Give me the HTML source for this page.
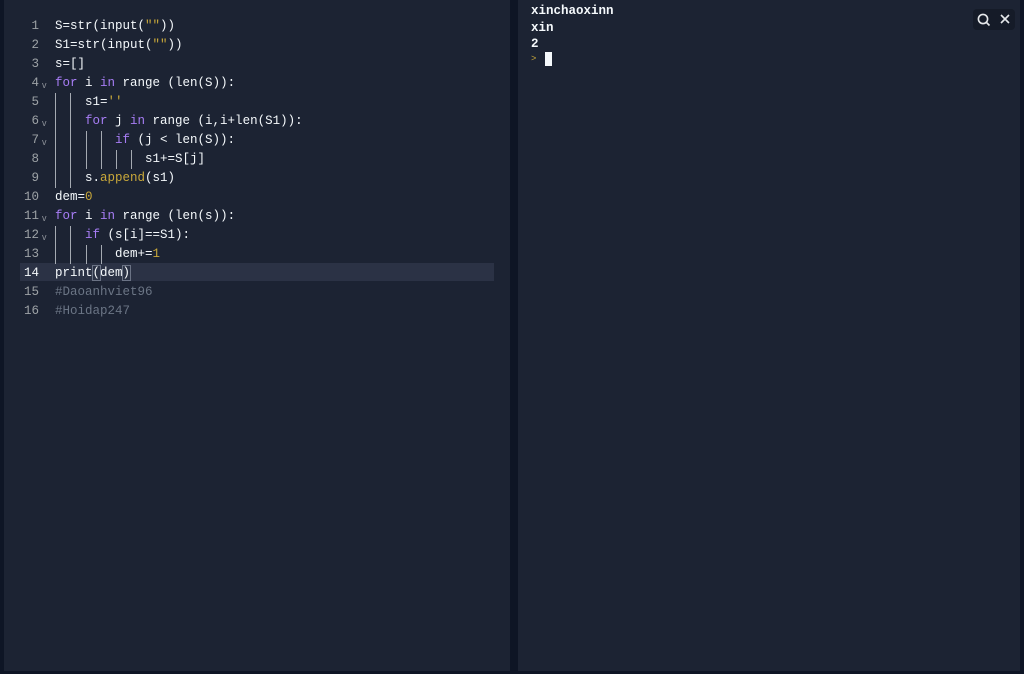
<!DOCTYPE html>
<html><head><style>
html,body{margin:0;padding:0;width:1024px;height:674px;background:#0e1525;overflow:hidden}
.p{position:absolute;background:#1c2333}
.code{position:absolute;left:0;top:17px;font-family:"Liberation Mono",monospace;font-size:12.5px;color:#f5f9fc}
.l{position:absolute;height:19px;line-height:19px;white-space:pre}
.n{position:absolute;width:39px;height:19px;line-height:19px;text-align:right;color:#9da2a6;font-family:"Liberation Mono",monospace;font-size:12.5px}
.k{color:#a77df5}.o{color:#c9a83a}.c{color:#6b7585}
.g{position:absolute;width:1px;background:#c8ccd2;opacity:.8}
.chev{position:absolute;color:#8e939a;font-size:9px;line-height:9px;font-family:"Liberation Sans",sans-serif}
.t{position:absolute;font-family:"Liberation Mono",monospace;font-size:12.5px;font-weight:bold;color:#f5f9fc;line-height:16.5px}
</style></head><body>
<div class="p" style="left:4px;top:0;width:506px;height:671px"></div>
<div class="p" style="left:518px;top:0;width:502px;height:671px"></div>
<div style="position:absolute;left:20px;top:263px;width:474px;height:18px;background:#2b3245"></div>
<div class="code">
<div class="n" style="top:0">1</div><div class="l" style="left:55px;top:0">S=str(input(<span class="o">""</span>))</div>
<div class="n" style="top:19px">2</div><div class="l" style="left:55px;top:19px">S1=str(input(<span class="o">""</span>))</div>
<div class="n" style="top:38px">3</div><div class="l" style="left:55px;top:38px">s=[]</div>
<div class="n" style="top:57px">4</div><div class="l" style="left:55px;top:57px"><span class="k">for</span> i <span class="k">in</span> range (len(S)):</div>
<div class="n" style="top:76px">5</div><div class="l" style="left:85px;top:76px">s1=<span class="o">''</span></div>
<div class="n" style="top:95px">6</div><div class="l" style="left:85px;top:95px"><span class="k">for</span> j <span class="k">in</span> range (i,i+len(S1)):</div>
<div class="n" style="top:114px">7</div><div class="l" style="left:115px;top:114px"><span class="k">if</span> (j &lt; len(S)):</div>
<div class="n" style="top:133px">8</div><div class="l" style="left:145px;top:133px">s1+=S[j]</div>
<div class="n" style="top:152px">9</div><div class="l" style="left:85px;top:152px">s.<span class="o">append</span>(s1)</div>
<div class="n" style="top:171px">10</div><div class="l" style="left:55px;top:171px">dem=<span class="o">0</span></div>
<div class="n" style="top:190px">11</div><div class="l" style="left:55px;top:190px"><span class="k">for</span> i <span class="k">in</span> range (len(s)):</div>
<div class="n" style="top:209px">12</div><div class="l" style="left:85px;top:209px"><span class="k">if</span> (s[i]==S1):</div>
<div class="n" style="top:228px">13</div><div class="l" style="left:115px;top:228px">dem+=<span class="o">1</span></div>
<div class="n" style="top:247px;color:#f5f9fc">14</div><div class="l" style="left:55px;top:247px">print<span style="outline:1px solid #6b7385">(</span>dem<span style="outline:1px solid #6b7385">)</span></div>
<div class="n" style="top:266px">15</div><div class="l c" style="left:55px;top:266px">#Daoanhviet96</div>
<div class="n" style="top:285px">16</div><div class="l c" style="left:55px;top:285px">#Hoidap247</div>
</div>
<div class="chev" style="left:42px;top:81px">v</div>
<div class="chev" style="left:42px;top:119px">v</div>
<div class="chev" style="left:42px;top:138px">v</div>
<div class="chev" style="left:42px;top:214px">v</div>
<div class="chev" style="left:42px;top:233px">v</div>
<div class="g" style="left:55px;top:93px;height:95px"></div>
<div class="g" style="left:70px;top:93px;height:95px"></div>
<div class="g" style="left:86px;top:131px;height:38px"></div>
<div class="g" style="left:101px;top:131px;height:38px"></div>
<div class="g" style="left:116px;top:150px;height:19px"></div>
<div class="g" style="left:131px;top:150px;height:19px"></div>
<div class="g" style="left:55px;top:226px;height:38px"></div>
<div class="g" style="left:70px;top:226px;height:38px"></div>
<div class="g" style="left:86px;top:245px;height:19px"></div>
<div class="g" style="left:101px;top:245px;height:19px"></div>
<div class="t" style="left:531px;top:3px">xinchaoxinn<br>xin<br>2</div>
<div style="position:absolute;left:531px;top:54px;color:#c9a83a;font-size:9px;font-family:'Liberation Mono',monospace">&gt;</div>
<div style="position:absolute;left:545px;top:52px;width:7px;height:14px;background:#f5f9fc"></div>
<div style="position:absolute;left:973px;top:9px;width:42px;height:21px;background:#151b28;border-radius:4px"></div>
<svg style="position:absolute;left:976px;top:12px" width="38" height="16" viewBox="0 0 38 16"><circle cx="7" cy="7" r="4.6" fill="none" stroke="#e6e8eb" stroke-width="1.6"/><path d="M10.5 10.5L13.5 13.5" stroke="#e6e8eb" stroke-width="1.6"/><path d="M25 3L33 11M33 3L25 11" stroke="#e6e8eb" stroke-width="1.6"/></svg>
</body></html>
